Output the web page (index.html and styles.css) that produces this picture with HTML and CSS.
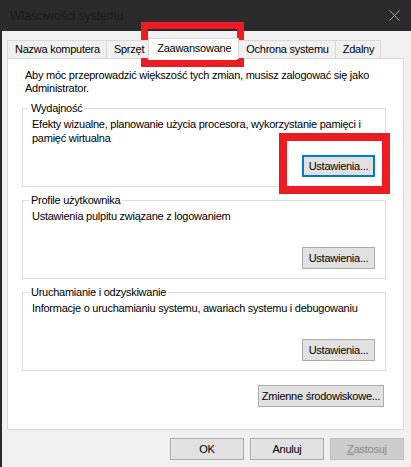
FILE: index.html
```html
<!DOCTYPE html>
<html lang="pl">
<head>
  <meta charset="UTF-8">
  <meta name="viewport" content="width=device-width, initial-scale=1">
  <title>Właściwości systemu</title>
  <link rel="stylesheet" href="styles.css">
</head>
<body>
  <div class="window">
    <div class="titlebar">
      <span class="title">Właściwości systemu</span>
      <svg class="close" width="11" height="11" viewBox="0 0 11 11">
        <path d="M0.5 0.5 L10.5 10.5 M10.5 0.5 L0.5 10.5" stroke="#a3a3a3" stroke-width="1" fill="none"/>
      </svg>
    </div>

    <div class="content">
      <div class="tabs">
        <div class="tab">Nazwa komputera</div>
        <div class="tab">Sprzęt</div>
        <div class="tab active">Zaawansowane</div>
        <div class="tab">Ochrona systemu</div>
        <div class="tab">Zdalny</div>
      </div>

      <div class="panel">
        <p class="note">Aby móc przeprowadzić większość tych zmian, musisz zalogować się jako Administrator.</p>

        <fieldset class="group">
          <legend>Wydajność</legend>
          <div class="group-body">
            <p>Efekty wizualne, planowanie użycia procesora, wykorzystanie pamięci i pamięć wirtualna</p>
            <button class="btn btn-set default">Ustawienia...</button>
          </div>
        </fieldset>

        <fieldset class="group">
          <legend>Profile użytkownika</legend>
          <div class="group-body">
            <p>Ustawienia pulpitu związane z logowaniem</p>
            <button class="btn btn-set">Ustawienia...</button>
          </div>
        </fieldset>

        <fieldset class="group">
          <legend>Uruchamianie i odzyskiwanie</legend>
          <div class="group-body">
            <p>Informacje o uruchamianiu systemu, awariach systemu i debugowaniu</p>
            <button class="btn btn-set">Ustawienia...</button>
          </div>
        </fieldset>

        <div class="env-row">
          <button class="btn btn-env">Zmienne środowiskowe...</button>
        </div>
      </div>

      <div class="footer">
        <button class="btn btn-foot">OK</button>
        <button class="btn btn-foot">Anuluj</button>
        <button class="btn btn-foot" disabled><u>Z</u>astosuj</button>
      </div>
    </div>

    <!-- red highlights drawn over the screenshot -->
    <div class="mark mark-tab"></div>
    <div class="mark mark-btn"></div>
  </div>
</body>
</html>
```

FILE: styles.css
```css
body {
  margin: 0;
  font-family: "Liberation Sans", Arial, sans-serif;
  font-size: 11px;
  letter-spacing: -0.25px;
  color: #000;
}

.window {
  position: relative;
  width: 411px;
  height: 467px;
  background: #f0f0f0;
  box-shadow: inset 2px 0 #2b282c;
  overflow: hidden;
}

.titlebar {
  height: 31px;
  background: #2d2a2e;
  display: flex;
  align-items: center;
  justify-content: space-between;
  padding: 0 11px 0 10px;
}

.title {
  color: #1a181b;
  font-size: 12px;
  letter-spacing: 0;
}

.content {
  padding: 7px 7px 0 7px;
}

.tabs {
  display: flex;
  align-items: flex-end;
  height: 20px;
  position: relative;
  z-index: 1;
}

.tab {
  height: 18px;
  box-sizing: border-box;
  padding: 0 6px 0 7px;
  border: 1px solid #d9d9d9;
  border-bottom: none;
  margin-right: -1px;
  background: #f0f0f0;
  line-height: 17px;
  white-space: nowrap;
}

.tab.active {
  height: 21px;
  margin: 0 -1px -1px -2px;
  padding: 0 7px 0 8px;
  background: #fff;
  line-height: 19px;
  position: relative;
  z-index: 2;
}

.panel {
  height: 372px;
  box-sizing: border-box;
  background: #fff;
  border: 1px solid #d9d9d9;
  padding: 10px 17px 0 14px;
}

.note {
  margin: 0 0 0 3px;
  line-height: 13px;
}

.group {
  margin: 7px 0 0 0;
  padding: 2px 10px 9px 9px;
  border: 1px solid #dcdcdc;
}

.group legend {
  margin-left: -3px;
  padding: 0 2px;
  line-height: 13px;
}

.group-body {
  height: 60px;
  display: flex;
  flex-direction: column;
}

.group-body p {
  margin: 0;
  line-height: 14px;
}

.btn {
  font-family: inherit;
  font-size: 11px;
  letter-spacing: inherit;
  white-space: nowrap;
  color: #000;
  background: #e1e1e1;
  border: 1px solid #adadad;
  height: 22px;
  padding: 0;
}

.btn-set {
  width: 73px;
  margin-top: auto;
  align-self: flex-end;
}

.btn.default {
  border: 2px solid #0078d7;
}

.env-row {
  display: flex;
  justify-content: flex-end;
  margin-top: 14px;
}

.btn-env {
  width: 126px;
  margin-right: 2px;
}

.footer {
  display: flex;
  justify-content: flex-end;
  gap: 6px;
  padding-top: 8px;
}

.btn-foot {
  width: 74px;
}

.btn-foot:disabled {
  background: #cccccc;
  border-color: #bfbfbf;
  color: #8a8a8a;
}

.mark {
  position: absolute;
  box-sizing: border-box;
  border: 7px solid #ed1c24;
}

.mark-tab {
  left: 141px;
  top: 22px;
  width: 103px;
  height: 45px;
}

.mark-btn {
  left: 279px;
  top: 133px;
  width: 111px;
  height: 61px;
  border-width: 8px;
}
```
